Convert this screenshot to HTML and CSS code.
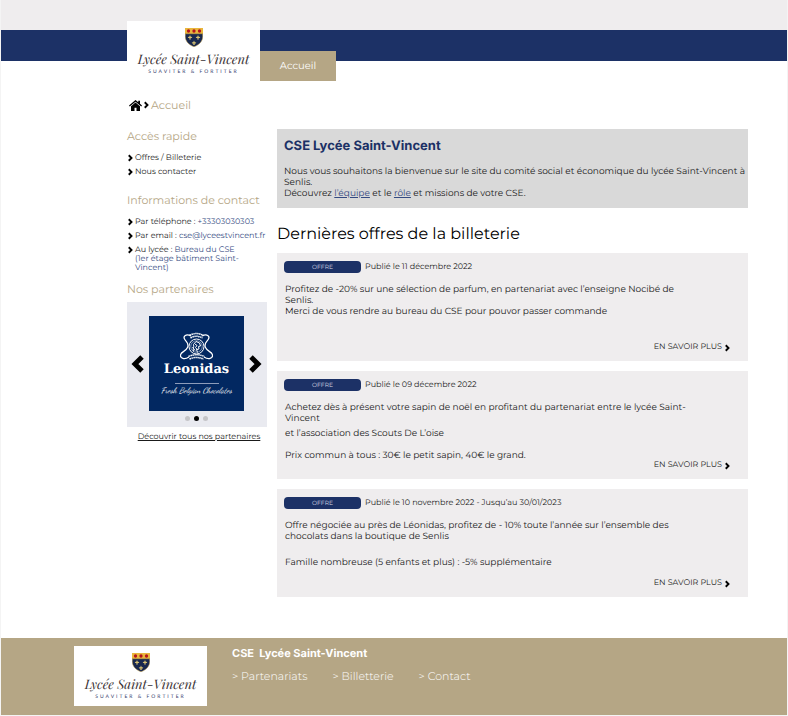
FILE: index.html
```html
<!DOCTYPE html>
<html lang="fr">
<head>
<meta charset="utf-8">
<meta name="viewport" content="width=device-width, initial-scale=1">
<title>CSE Lycée Saint-Vincent</title>
<link rel="stylesheet" href="styles.css">
</head>
<body>
<svg class="defs" aria-hidden="true">
  <symbol id="crest" viewBox="0 0 36 38">
    <path fill="#e9b63c" d="M0 0h36v12H0z"/>
    <path fill="#18284f" stroke="#c9a44a" stroke-width="1" d="M.5 11.500h35V17c0 9-7 17-17.500 20.500C7.500 34 .5 26 .5 17z"/>
    <g fill="#b3141c"><circle cx="7" cy="6" r="3.300"/><circle cx="18" cy="6" r="3.300"/><circle cx="29" cy="6" r="3.300"/></g>
    <g fill="#d9c374">
      <path d="M10 14l1.500 3.500 3 .5-1 2-2.500 0 .5 3h-3l.5-3-2.500 0-1-2 3-.5z"/>
      <path d="M26 14l1.500 3.500 3 .5-1 2-2.500 0 .5 3h-3l.5-3-2.500 0-1-2 3-.5z"/>
      <path d="M18 25l1.500 3.500 3 .5-1 2-2.500 0 .5 3h-3l.5-3-2.500 0-1-2 3-.5z"/>
    </g>
  </symbol>
  <symbol id="chevron" viewBox="0 0 10 14">
    <path fill="none" stroke="currentColor" stroke-width="3.800" d="M1.500 1.500L7 7 1.500 12.500"/>
  </symbol>
  <symbol id="home" viewBox="0 0 26 22">
    <path d="M13 0L0 11l1.500 2L13 3.500 24.500 13 26 11l-4-3.400V1.500h-3.500v3.200z"/>
    <path d="M13 5L4 12.500V22h7v-6.500h4V22h7v-9.500z"/>
  </symbol>
</svg>

<header class="header">
  <a class="logo" href="#">
    <svg class="logo-crest" aria-hidden="true"><use href="#crest"/></svg>
    <span class="logo-name">Lycée Saint-Vincent</span>
    <span class="logo-motto">SUAVITER &amp; FORTITER</span>
  </a>
  <nav><a class="tab" href="#">Accueil</a></nav>
</header>

<nav class="breadcrumb" aria-label="Fil d’Ariane">
  <a class="home" href="#" aria-label="Page d’accueil"><svg class="home-icon"><use href="#home"/></svg></a>
  <svg class="chev" aria-hidden="true"><use href="#chevron"/></svg>
  <span>Accueil</span>
</nav>

<div class="layout">
  <aside class="sidebar">
    <h2>Accès rapide</h2>
    <ul class="list quick">
      <li><svg class="chev"><use href="#chevron"/></svg><a href="#">Offres / Billeterie</a></li>
      <li><svg class="chev"><use href="#chevron"/></svg><a href="#">Nous contacter</a></li>
    </ul>
    <h2>Informations de contact</h2>
    <ul class="list contact">
      <li><svg class="chev"><use href="#chevron"/></svg><span>Par téléphone : <a href="#">+33303030303</a></span></li>
      <li><svg class="chev"><use href="#chevron"/></svg><span>Par email : <a href="#">cse@lyceestvincent.fr</a></span></li>
      <li><svg class="chev"><use href="#chevron"/></svg><span>Au lycée : <a href="#">Bureau du CSE<br>(1er étage bâtiment Saint-<br>Vincent)</a></span></li>
    </ul>
    <h2>Nos partenaires</h2>
    <section class="carousel" aria-label="Nos partenaires">
      <div class="slide-row">
        <button class="arrow" type="button" aria-label="Précédent"><svg class="arrow-icon prev"><use href="#chevron"/></svg></button>
        <div class="slide">
          <svg class="emblem" viewBox="0 0 66 60" fill="none" stroke="#fff" aria-hidden="true">
            <circle cx="33" cy="29" r="15" stroke-width="2"/>
            <circle cx="33" cy="29" r="11.500" stroke-width="1"/>
            <path stroke-width="3" stroke-dasharray="3 1" d="M19 7Q33 -1 47 7M21 12Q33 5 45 12"/>
            <path stroke-width="2.500" d="M22 8C12 3 6 8 9 14s10 8 6 17-13 8-14 15 8 10 17 4M44 8c10-5 16 0 13 6s-10 8-6 17 13 8 14 15-8 10-17 4"/>
            <path stroke-width="3" stroke-dasharray="3 1" d="M17 49q16-7 32 0M19 54q14-6 28 0"/>
            <path stroke-width="2" d="M27 39c-2-6 2-9 0-14l5-6 7 3 2 6-4 1 1 5-5 1 2 6M30 24l4 3-3 4 4 5M25 30l5 7"/>
          </svg>
          <strong class="brand">Leonidas</strong>
          <span class="slogan">Fresh Belgian Chocolates</span>
        </div>
        <button class="arrow" type="button" aria-label="Suivant"><svg class="arrow-icon"><use href="#chevron"/></svg></button>
      </div>
      <div class="dots"><i></i><i class="on"></i><i></i></div>
    </section>
    <a class="all" href="#">Découvrir tous nos partenaires</a>
  </aside>

  <main class="main">
    <section class="intro">
      <h1>CSE Lycée Saint-Vincent</h1>
      <p>Nous vous souhaitons la bienvenue sur le site du comité social et économique du lycée Saint-Vincent à Senlis.<br>Découvrez <a href="#">l’équipe</a> et le <a href="#">rôle</a> et missions de votre CSE.</p>
    </section>
    <h2 class="title">Dernières offres de la billeterie</h2>
    <div class="offers">
      <article class="card">
        <div class="meta"><span class="pill">OFFRE</span><span>Publié le 11 décembre 2022</span></div>
        <p>Profitez de -20% sur une sélection de parfum, en partenariat avec l’enseigne Nocibé de<br>Senlis.<br>Merci de vous rendre au bureau du CSE pour pouvor passer commande</p>
        <a class="more" href="#">EN SAVOIR PLUS <svg class="chev"><use href="#chevron"/></svg></a>
      </article>
      <article class="card">
        <div class="meta"><span class="pill">OFFRE</span><span>Publié le 09 décembre 2022</span></div>
        <p>Achetez dès à présent votre sapin de noël en profitant du partenariat entre le lycée Saint-<br>Vincent</p>
        <p class="near">et l’association des Scouts De L’oise</p>
        <p class="after">Prix commun à tous : 30€ le petit sapin, 40€ le grand.</p>
        <a class="more" href="#">EN SAVOIR PLUS <svg class="chev"><use href="#chevron"/></svg></a>
      </article>
      <article class="card">
        <div class="meta"><span class="pill">OFFRE</span><span>Publié le 10 novembre 2022 - Jusqu’au 30/01/2023</span></div>
        <p>Offre négociée au près de Léonidas, profitez de - 10% toute l’année sur l’ensemble des<br>chocolats dans la boutique de Senlis</p>
        <p class="far">Famille nombreuse (5 enfants et plus) : -5% supplémentaire</p>
        <a class="more" href="#">EN SAVOIR PLUS <svg class="chev"><use href="#chevron"/></svg></a>
      </article>
    </div>
  </main>
</div>

<footer class="footer">
  <a class="logo" href="#">
    <svg class="logo-crest" aria-hidden="true"><use href="#crest"/></svg>
    <span class="logo-name">Lycée Saint-Vincent</span>
    <span class="logo-motto">SUAVITER &amp; FORTITER</span>
  </a>
  <div>
    <h2>CSE&nbsp; Lycée Saint-Vincent</h2>
    <nav class="footer-nav">
      <a href="#">&gt; Partenariats</a>
      <a href="#">&gt; Billetterie</a>
      <a href="#">&gt; Contact</a>
    </nav>
  </div>
</footer>
</body>
</html>
```
FILE: styles.css
```css
:root {
  --navy: #1c3166;
  --sand: #b5a685;
  --mist: #efedee;
}
* { box-sizing: border-box; }
body {
  margin: 0;
  border: solid #f4f4f4;
  border-width: 0 1px 1px;
  background: #fff;
  color: #1a1a1a;
  font: 9px/11px Montserrat, Inter, "Open Sans", sans-serif;
  text-rendering: geometricPrecision;
}
h1, h2, p, ul { margin: 0; padding: 0; }
a { color: inherit; text-decoration: none; }
.defs { position: absolute; width: 0; height: 0; }

.header {
  display: flex;
  align-items: flex-end;
  padding: 21px 40px 0 126px;
  background: linear-gradient(var(--mist) 30px, var(--navy) 30px, var(--navy) 61px, #fff 61px);
}
.logo {
  display: flex;
  flex-direction: column;
  align-items: center;
  width: 133px;
  height: 60px;
  padding-top: 7px;
  background: #fff;
}
.logo-crest { width: 18px; height: 19px; }
.logo-name {
  margin-top: 5px;
  color: #3b3335;
  font: italic 13px/16px "Playfair Display", "Liberation Serif", serif;
}
.logo-motto {
  margin-top: 1px;
  color: #3a3f70;
  font: 5px/6px Lato, sans-serif;
  letter-spacing: 2px;
}
.tab {
  display: block;
  width: 76px;
  background: var(--sand);
  color: #fff;
  font-size: 10px;
  line-height: 30px;
  text-align: center;
}

.breadcrumb {
  display: flex;
  align-items: center;
  gap: 2px;
  padding: 17px 40px 0 128px;
  color: var(--sand);
  font-size: 11px;
  line-height: 14px;
}
.home { color: #000; display: flex; }
.home-icon { width: 13px; height: 11px; }
.chev { flex: none; width: 5px; height: 8px; color: #000; }

.layout {
  display: flex;
  gap: 10px;
  align-items: flex-start;
  padding: 17px 39px 41px 126px;
}
.sidebar { flex: none; width: 140px; }
.sidebar h2 {
  color: var(--sand);
  font-size: 11px;
  font-weight: 400;
  line-height: 14px;
  white-space: nowrap;
}
.list {
  display: grid;
  gap: 5px;
  list-style: none;
  font-size: 8px;
  line-height: 9px;
  white-space: nowrap;
}
.list li { display: flex; gap: 2px; padding-left: 1px; }
.quick { margin: 11px 0 16px; }
.contact { margin: 11px 0 9px; }
.contact a { color: #344a82; }
.carousel { margin-top: 6px; padding: 14px 5px 6px 4px; background: #e9eaf0; }
.slide-row { display: flex; align-items: center; justify-content: space-between; }
.arrow { display: flex; width: 13px; padding: 0; border: 0; background: none; color: #000; }
.arrow-icon { width: 13px; height: 18px; }
.prev { transform: scaleX(-1); }
.slide {
  display: flex;
  flex-direction: column;
  align-items: center;
  width: 95px;
  height: 95px;
  padding-top: 16px;
  background: #022861;
  color: #fff;
}
.emblem { width: 33px; height: 30px; }
.brand { font: bold 13px/16px "DejaVu Serif", serif; }
.slogan {
  width: 80px;
  margin-top: 5px;
  background: linear-gradient(#8d9cba, #8d9cba) center top / 44px 1px no-repeat;
  padding-top: 3px;
  font: italic 8px/12px "Dancing Script", "Liberation Serif", serif;
  text-align: center;
  white-space: nowrap;
}
.dots { display: flex; justify-content: center; gap: 4px; margin-top: 5px; }
.dots i { width: 5px; height: 5px; border-radius: 50%; background: #c5c5c8; }
.dots .on { background: #000; }
.all {
  display: block;
  margin: 5px 0 0 4px;
  font-size: 8px;
  text-align: center;
  text-decoration: underline;
  white-space: nowrap;
}

.main { flex: 1; min-width: 0; }
.intro { padding: 9px 2px 9px 7px; background: #d9d9d9; }
.intro h1 { margin-bottom: 12px; color: var(--navy); font: 700 13px/16px Inter, sans-serif; }
.intro p a { color: #344a82; text-decoration: underline; }
.title { margin: 17px 0 8px; color: #000; font-size: 16px; font-weight: 400; line-height: 20px; }
.offers { display: grid; gap: 10px; }
.card {
  display: flex;
  flex-direction: column;
  min-height: 108px;
  padding: 8px 18px 9px 8px;
  background: var(--mist);
}
.meta { display: flex; align-items: center; gap: 4px; margin: 0 0 11px -1px; font-size: 8px; line-height: 12px; }
.pill {
  width: 77px;
  border-radius: 4px;
  background: var(--navy);
  color: #d5d9e4;
  font-size: 6px;
  text-align: center;
}
.near { margin-top: 4px; }
.after { margin-top: 11px; }
.far { margin-top: 15px; }
.more {
  display: flex;
  align-items: center;
  gap: 3px;
  margin-top: auto;
  margin-left: auto;
  font-size: 8px;
  line-height: 9px;
}

.footer {
  display: flex;
  gap: 25px;
  padding: 8px 40px 9px 73px;
  background: var(--sand);
  color: #fff;
}
.footer h2 { font: 700 11px/14px Inter, sans-serif; }
.footer-nav { display: flex; gap: 25px; margin-top: 8px; font-size: 11px; font-weight: 300; line-height: 16px; }
```
